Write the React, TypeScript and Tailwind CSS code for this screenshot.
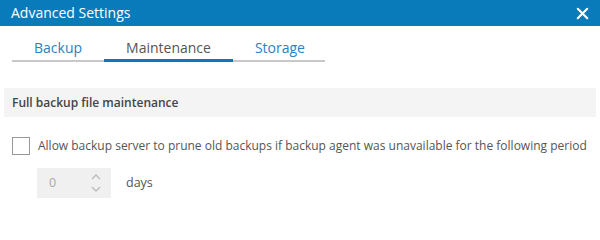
import { X } from 'lucide-react';

const font = { fontFamily: '"Open Sans", "Noto Sans", sans-serif' };

export default function App() {
  const tabs = ['Backup', 'Maintenance', 'Storage'];
  const active = 1;

  return (
    <div className="w-[600px] h-[208px] bg-white overflow-hidden text-[#555]" style={font}>
      {/* title bar */}
      <div className="h-[26px] bg-[#0a7bba] flex items-center justify-between pl-[11px] pr-[8px]">
        <span className="text-white text-[14px] leading-none">Advanced Settings</span>
        <X className="w-[19px] h-[19px] text-white" strokeWidth={2.6} />
      </div>

      {/* tabs */}
      <div className="ml-[12px] mt-[12px] flex w-[313px] border-b-2 border-[#c8c8c8]">
        {tabs.map((t, i) => (
          <div
            key={t}
            className={`px-[22px] leading-[20px] pb-[1px] text-[14px] -mb-[2px] border-b-[3px] ${
              i === active ? 'text-[#555] border-[#0a7bba]' : 'text-[#2c7fc1] border-transparent'
            }`}
          >
            {t}
          </div>
        ))}
      </div>

      {/* section */}
      <div className="mx-[4px] mt-[26px] h-[29px] bg-[#f4f4f4] flex items-center pl-[8px]">
        <span className="text-[12px] font-semibold text-[#444]">Full backup file maintenance</span>
      </div>

      <div className="pl-[12px] mt-[20px] flex items-center gap-[8px]">
        <div className="w-[18px] h-[18px] border border-[#999] bg-white shrink-0" />
        <span className="text-[12px] whitespace-nowrap">
          Allow backup server to prune old backups if backup agent was unavailable for the following period
        </span>
      </div>

      <div className="pl-[37px] mt-[13px] flex items-center">
        <div className="w-[74px] h-[30px] bg-[#f0f0f0] flex items-center justify-between pl-[12px] pr-[10px]">
          <span className="text-[12.5px] text-[#aaa]">0</span>
          <svg width="10" height="20" viewBox="0 0 10 20" fill="none" stroke="#bbb" strokeWidth="1.3">
            <path d="M1 6 L5 2 L9 6" />
            <path d="M1 14 L5 18 L9 14" />
          </svg>
        </div>
        <span className="ml-[15px] text-[12.5px]">days</span>
      </div>
    </div>
  );
}
